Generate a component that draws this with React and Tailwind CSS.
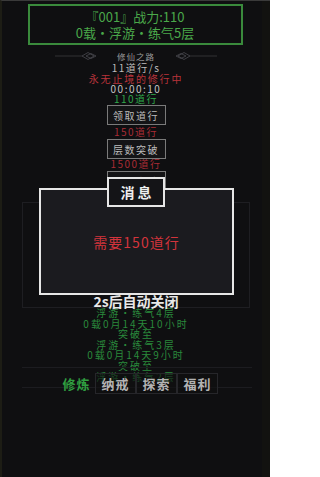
import React from 'react'

const font = { fontFamily: '"Noto Sans CJK SC", "Noto Sans", sans-serif' }

function Ornament({ flip }) {
  // thin rule with a double diamond near the title
  return (
    <svg width="44" height="10" viewBox="0 0 44 10" className={flip ? 'scale-x-[-1]' : ''}>
      <line x1="0" y1="5" x2="27" y2="5" stroke="#3a3a3e" strokeWidth="0.8" />
      <path d="M27 5 L33 1.5 L39 5 L33 8.5 Z" fill="none" stroke="#4a4a50" strokeWidth="0.8" />
      <path d="M31 5 L36 2.5 L41 5 L36 7.5 Z" fill="none" stroke="#4a4a50" strokeWidth="0.8" />
    </svg>
  )
}

const path = [
  '浮游・练气4层',
  '0载0月14天10小时',
  '突破至',
  '浮游・练气3层',
  '0载0月14天9小时',
  '突破至',
  '浮游・练气2层',
]

export default function App() {
  return (
    <div className="relative w-[270px] h-[477px] overflow-hidden bg-[#0f0f11] border-l-2 border-[#1d1d15] border-t border-t-[#3a3a3a]" style={font}>
      <div className="absolute right-0 top-0 bottom-0 w-[8px] bg-[#121210]" />

      <div className="flex flex-col items-center pt-[3px]">
        <div className="w-[215px] h-[41px] ml-[-2px] border-2 border-[#3a8a3c] flex flex-col items-center justify-center text-[13px] leading-[16px] text-[#4aa84a]">
          <div>『001』战力:110</div>
          <div>0载・浮游・练气5层</div>
        </div>

        <div className="mt-[6px] flex items-center gap-[18px] h-[10px]">
          <Ornament />
          <span className="text-[8.5px] leading-[10px] text-[#9a9a9a] tracking-[1px]">修仙之路</span>
          <Ornament flip />
        </div>
        <div className="mt-[2px] text-[10px] leading-[10px] text-[#bdbdbd] tracking-[1.5px]">11道行/s</div>
        <div className="mt-[1px] text-[10px] leading-[10px] text-[#b8333a] tracking-[1.8px]">永无止境的修行中</div>
        <div className="text-[10px] leading-[10px] text-[#c4c4c4] tracking-[1.5px]">00:00:10</div>
        <div className="text-[10px] leading-[10px] text-[#2ea84a] tracking-[1.5px]">110道行</div>

        <button className="mt-[1px] w-[59px] h-[20px] border border-[#7a7a7a] text-[10px] text-[#bcbcbc] tracking-[1.5px] bg-[#141416]">领取道行</button>
        <div className="mt-[1px] text-[10px] leading-[12px] text-[#a92c35] tracking-[1.5px]">150道行</div>
        <button className="mt-[1px] w-[59px] h-[20px] border border-[#7a7a7a] text-[10px] text-[#bcbcbc] tracking-[1.5px] bg-[#141416]">层数突破</button>
        <div className="text-[10px] leading-[10px] text-[#a92c35] tracking-[1.5px]">1500道行</div>
        <button className="mt-[2px] w-[59px] h-[20px] border border-[#7a7a7a] text-[10px] text-[#bcbcbc] tracking-[1.5px] bg-[#141416]">境界突破</button>

        <div className="mt-[11px] w-[228px] h-[106px] border border-[#1e1e22]" />

        <div className="flex flex-col items-center text-[10px] leading-[10.6px] text-[#2a8a3c] tracking-[2px]">
          {path.map((t, i) => (
            <div key={i}>{t}</div>
          ))}
        </div>
      </div>

      {/* faint panel lines behind */}
      <div className="absolute left-[20px] top-[366px] w-[230px] h-[21px] border-t border-b border-[#1c1c20]" />

      {/* tab bar */}
      <div className="absolute left-[56px] top-[372px] flex">
        {['修炼', '纳戒', '探索', '福利'].map((t, i) => (
          <div
            key={t}
            className={
              i === 0
                ? 'w-[37px] h-[21px] flex items-center justify-center text-[13px] font-bold tracking-[1px] text-[#2f9e40]'
                : 'w-[41px] h-[21px] flex items-center justify-center text-[13px] font-bold tracking-[1px] text-[#b3b3b3] border border-[#26262a] bg-[#0f0f11]/60'
            }
          >
            {t}
          </div>
        ))}
      </div>

      {/* message dialog */}
      <div className="absolute left-[37px] top-[187px] w-[195px] h-[107px] border-2 border-[#e6e6e6] bg-[#1b1b1f] flex items-center justify-center">
        <span className="text-[14px] text-[#d3343c] tracking-[1px] mt-[2px]">需要150道行</span>
      </div>
      <div className="absolute left-[105px] top-[176px] w-[58px] h-[30px] border-2 border-[#e6e6e6] bg-[#141417] flex items-center justify-center">
        <span className="text-[14px] font-bold text-[#eeeeee] tracking-[3px] ml-[3px]">消息</span>
      </div>
      <div className="absolute left-0 right-0 top-[292px] flex justify-center">
        <span className="text-[14px] leading-[16px] font-bold text-[#e8e8e8]">2s后自动关闭</span>
      </div>
    </div>
  )
}
